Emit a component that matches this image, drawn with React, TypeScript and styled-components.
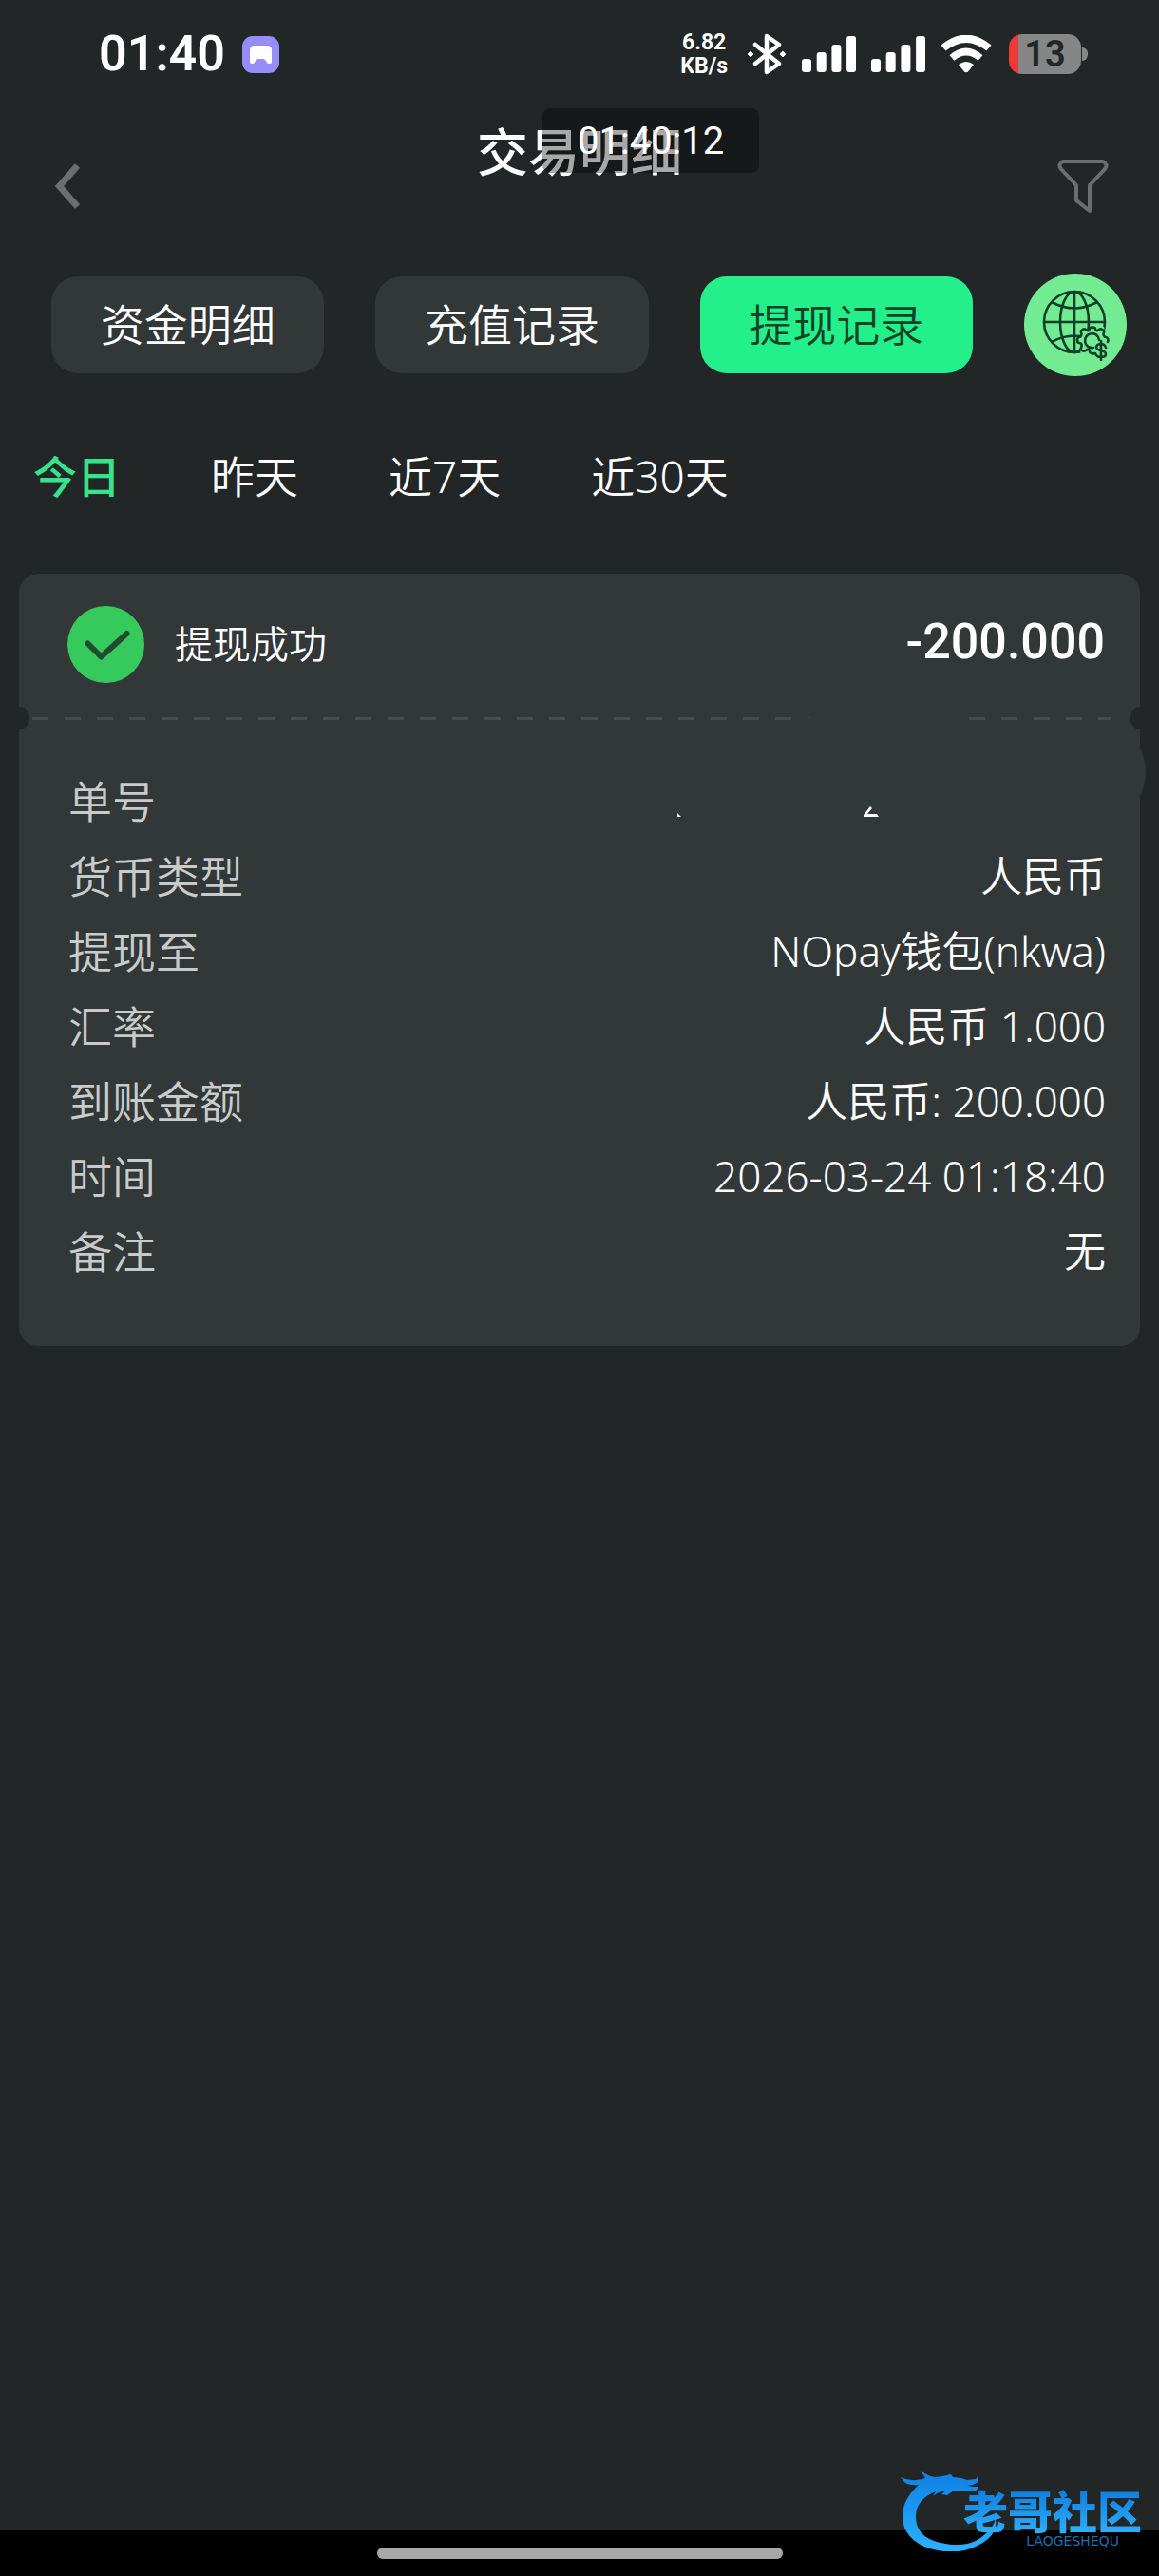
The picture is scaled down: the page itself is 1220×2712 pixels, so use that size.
import React, { useState } from 'react';
import styled, { createGlobalStyle } from 'styled-components';

const latin = `Roboto, "Noto Sans CJK SC", sans-serif`;
const body = `"Noto Sans", "Noto Sans CJK SC", sans-serif`;
const cjk = `"Noto Sans CJK SC", sans-serif`;

const GlobalStyle = createGlobalStyle`
  * { box-sizing: border-box; }
  body { margin: 0; background: #222626; }
  button { border: 0; padding: 0; background: none; font: inherit; color: inherit; cursor: pointer; }
`;

const Screen = styled.div`
  position: relative;
  display: flex;
  flex-direction: column;
  min-height: 100vh;
  overflow: hidden;
  background: #222626;
  color: #fff;
  font-family: ${body};
  font-weight: 350;
`;

const StatusBar = styled.div`
  display: flex;
  align-items: center;
  justify-content: space-between;
  height: 114px;
  padding: 0 75px 0 104px;
  font-family: ${latin};
`;

const StatusGroup = styled.div<{ $gap: number }>`
  display: flex;
  align-items: center;
  gap: ${(p) => p.$gap}px;
`;

const Clock = styled.span`
  font-size: 52px;
  font-weight: 600;
  line-height: 60px;
`;

const Speed = styled.span`
  display: flex;
  flex-direction: column;
  align-items: center;
  margin-right: 4px;
  font-size: 23px;
  font-weight: 700;
  line-height: 25px;
`;

const Battery = styled.div`
  display: flex;
  align-items: center;
  gap: 1px;
  margin-left: 2px;
  &::after {
    content: '';
    width: 6px;
    height: 14px;
    border-radius: 0 6px 6px 0;
    background: #858786;
  }
`;

const BatteryBody = styled.span`
  width: 76px;
  height: 42px;
  border-radius: 14px;
  background: linear-gradient(90deg, #ee3a32 0 10px, #858786 10px);
  color: #222626;
  font-size: 38px;
  font-weight: 600;
  line-height: 43px;
  text-align: center;
`;

const Header = styled.header`
  position: relative;
  display: flex;
  align-items: flex-end;
  justify-content: space-between;
  height: 112px;
  padding: 0 50px;
`;

const Title = styled.h1`
  align-self: flex-start;
  margin: 0;
  font-family: ${cjk};
  font-size: 54px;
  font-weight: 500;
  line-height: 88px;
`;

const IconButton = styled.button`
  display: grid;
  place-items: center;
  width: 60px;
  height: 60px;
  color: #6c6e6e;
  &:first-child { justify-items: start; }
`;

const ClockOverlay = styled.div`
  position: absolute;
  top: 0;
  left: calc(50% - 39px);
  width: 228px;
  height: 68px;
  padding-left: 37px;
  border-radius: 8px;
  background: rgba(0, 0, 0, 0.34);
  font-family: ${latin};
  font-size: 40px;
  font-weight: 400;
  line-height: 70px;
`;

const RecordTabs = styled.nav`
  display: flex;
  align-items: center;
  gap: 54px;
  padding: 62px 34px 0 54px;
`;

const RecordTab = styled.button<{ $active: boolean }>`
  flex: 1;
  height: 102px;
  padding-bottom: 6px;
  border-radius: 28px;
  background: ${(p) => (p.$active ? '#24f08b' : '#323737')};
  color: ${(p) => (p.$active ? '#0b4326' : '#fff')};
  font-family: ${cjk};
  font-size: 46px;
  line-height: 60px;
`;

const CurrencyButton = styled.button`
  display: grid;
  place-items: center;
  flex: none;
  width: 108px;
  height: 108px;
  border-radius: 50%;
  background: #73eb92;
  color: #10402a;
`;

const DateTabs = styled.nav`
  display: flex;
  gap: 95px;
  padding: 75px 35px 73px;
`;

const DateTab = styled.button<{ $active: boolean }>`
  color: ${(p) => (p.$active ? '#36e38b' : '#fff')};
  font-size: 46px;
  font-weight: ${(p) => (p.$active ? 500 : 350)};
  line-height: 60px;
`;

const Card = styled.article`
  position: relative;
  margin: 0 20px;
  border-radius: 20px;
  background: #323737;
`;

const CardHead = styled.header`
  display: flex;
  align-items: center;
  height: 151px;
  padding: 0 37px 2px 51px;
`;

const Status = styled.h2`
  flex: 1;
  margin: 0 0 0 32px;
  padding-bottom: 6px;
  font-family: ${cjk};
  font-size: 40px;
  font-weight: 350;
  line-height: 60px;
`;

const Amount = styled.strong`
  padding-bottom: 6px;
  font-family: ${latin};
  font-size: 52px;
  font-weight: 500;
  line-height: 60px;
`;

const Divider = styled.div`
  position: relative;
  height: 3px;
  margin: 0 30px 0 14px;
  background: repeating-linear-gradient(90deg, #494c4c 0 17px, transparent 17px 34px);
  &::before,
  &::after {
    content: '';
    position: absolute;
    top: -11px;
    height: 24px;
    background: #222626;
  }
  &::before {
    left: -14px;
    width: 11px;
    border-radius: 0 12px 12px 0;
  }
  &::after {
    right: -30px;
    width: 10px;
    border-radius: 12px 0 0 12px;
  }
`;

const Redaction = styled.svg`
  position: absolute;
  top: 126px;
  right: -20px;
`;

const Details = styled.dl`
  display: flex;
  flex-direction: column;
  gap: 24px;
  margin: 0;
  padding: 58px 36px 72px 52px;
`;

const DetailRow = styled.div`
  display: flex;
  align-items: center;
  justify-content: space-between;
  line-height: 55px;
`;

const Label = styled.dt`
  color: #c9cbcb;
  font-size: 46px;
`;

const Value = styled.dd`
  margin: 0;
  font-size: 44px;
`;

const HomeBar = styled.footer`
  display: grid;
  place-items: center;
  height: 48px;
  margin-top: auto;
  background: #000;
  &::after {
    content: '';
    width: 35%;
    height: 12px;
    border-radius: 6px;
    background: #a8a8a8;
  }
`;

const Watermark = styled.div`
  position: absolute;
  right: 18px;
  bottom: 26px;
  width: 254px;
  height: 90px;
`;

const DragonArt = styled.svg`
  position: absolute;
  left: 0;
  top: 0;
`;

const WatermarkText = styled.div`
  position: absolute;
  right: 0;
  top: 20px;
  display: flex;
  flex-direction: column;
  align-items: flex-end;
`;

const WatermarkName = styled.span`
  background: linear-gradient(#0b78dc, #2fb0fb);
  background-clip: text;
  color: transparent;
  font-family: ${cjk};
  font-size: 47px;
  font-weight: 900;
  line-height: 52px;
`;

const WatermarkLatin = styled.span`
  margin-right: 24px;
  color: #1a6fb4;
  font-family: "DejaVu Sans", sans-serif;
  font-size: 14px;
  font-weight: 400;
  line-height: 14px;
`;

const AppBadge = () => (
  <svg width="39" height="39" viewBox="0 0 39 39" aria-hidden="true">
    <rect width="39" height="39" rx="11" fill="#978cf8" />
    <path d="M13 10h13q5 0 5 5v12q0 2-2 2h-2l-3-4q-1-1-2-1h-5q-1 0-2 1l-3 4h-2q-2 0-2-2V15q0-5 5-5z" fill="#fff" />
  </svg>
);

const Bluetooth = () => (
  <svg width="42" height="44" viewBox="0 0 42 44" aria-hidden="true">
    <path d="M9 12l25 20-13 9V3l13 9L9 32" fill="none" stroke="#fff" strokeWidth="4.5" strokeLinejoin="round" strokeLinecap="round" />
    <path d="M4 19l3 3-3 3-3-3zM38 19l3 3-3 3-3-3z" fill="#fff" stroke="#fff" strokeLinejoin="round" />
  </svg>
);

const Signal = () => (
  <svg width="57" height="38" viewBox="0 0 57 38" fill="#fff" aria-hidden="true">
    {[14, 21, 29, 38].map((h, i) => (
      <rect key={h} x={i * 15.7} y={38 - h} width="10" height={h} rx="3" />
    ))}
  </svg>
);

const Wifi = () => (
  <svg width="54" height="40" viewBox="0 0 54 40" aria-hidden="true">
    <path d="M3 13.500Q27-6 51 13.500" fill="none" stroke="#fff" strokeWidth="8" />
    <path d="M12 24Q27 11 42 24" fill="none" stroke="#fff" strokeWidth="7.5" />
    <path d="M19 31Q27 25 35 31L29 38.500Q27 40 25 38.500Z" fill="#fff" />
  </svg>
);

const BackIcon = () => (
  <svg width="36" height="50" viewBox="0 0 36 50" fill="none" stroke="currentColor" strokeWidth="7" aria-hidden="true">
    <path d="M31.500 3.500L12.500 25l19 21.500" />
  </svg>
);

const FilterIcon = () => (
  <svg width="54" height="58" viewBox="0 0 54 58" fill="none" stroke="currentColor" strokeWidth="4" aria-hidden="true">
    <path d="M6 3h42q6 3 2 8L34 28v27l-14-11V28L4 11Q0 6 6 3z" strokeLinejoin="round" />
  </svg>
);

const CheckIcon = () => (
  <svg width="81" height="81" viewBox="0 0 81 81" aria-hidden="true">
    <circle cx="40.500" cy="40.500" r="40.500" fill="#36c95c" />
    <path d="M21.500 39.500l14 14 27-24.500" fill="none" stroke="#214a33" strokeWidth="6" strokeLinecap="round" strokeLinejoin="round" />
  </svg>
);

const GlobeIcon = () => (
  <svg width="72" height="76" viewBox="0 0 72 76" fill="none" stroke="currentColor" strokeWidth="2.600" aria-hidden="true">
    <circle cx="35" cy="35" r="32" />
    <ellipse cx="35" cy="35" rx="15" ry="32" />
    <path d="M35 3v64M3 35h64M11 14q24 13 48 0M11 56q24-13 48 0" />
    <path
      d="M54 37l5 4 7-1 1 7 5 4-2 6 2 12-6 6H50l-9-6 1-7-5-5 5-5v-7l7-1z"
      fill="#73eb92"
      stroke="none"
    />
    <path
      d="M70 56c1-2 0-5-2-5s-3-3-2-5-3-5-5-3-4 1-4-1-6-2-6 0-2 3-4 1-6 1-5 3 0 5-2 5-3 6 0 6 3 3 2 5 2 5 5 3 4-1 4 1 3 3 5 2"
      strokeLinecap="round"
    />
    <path d="M61 54a7.500 7.500 0 1 0-6 8" strokeLinecap="round" />
    <path d="M68 62q-1-4-5-4t-5 3q0 3 5 4t5 4q0 3-5 3t-6-4M63 55v20" strokeLinecap="round" />
  </svg>
);

const RedactionMark = () => (
  <Redaction width="540" height="150" viewBox="680 730 540 150" aria-hidden="true">
    <ellipse cx="933" cy="805" rx="108" ry="75" fill="#323737" />
    <circle cx="1151" cy="813" r="55" fill="#323737" />
    <path d="M713 856l4 4h-4zM916 849l2 2-5 6h10l2 3h-16v-2z" fill="#fff" />
  </Redaction>
);

const Dragon = () => (
  <DragonArt width="110" height="90" viewBox="0 0 110 90" aria-hidden="true">
    <defs>
      <linearGradient id="dragon" x1="0" y1="0" x2="0" y2="1">
        <stop offset="0" stopColor="#0f7fe4" />
        <stop offset="1" stopColor="#2bb2ff" />
      </linearGradient>
    </defs>
    <path
      d="M0 12q10 5 23 2l3-1-5-8q8 6 15 7l8-1 9-2 2 3 9 1 6 2 9-1 3-4v7l-6 3-6 1 7 1 5 0-3 5-8-1-7 1-8-1-7 5-6-1 5-4-8 2-6 4 3-5Q15 36 16 55t22 25q33 9 51-8 9-8 11-16 2 12-8 21-20 16-47 13Q13 86 4 65-4 41 19 20q-10 1-15-3z"
      fill="url(#dragon)"
    />
  </DragonArt>
);

const recordTabs = ['资金明细', '充值记录', '提现记录'];
const dateTabs = ['今日', '昨天', '近7天', '近30天'];
const details = [
  ['单号', ''],
  ['货币类型', '人民币'],
  ['提现至', 'NOpay钱包(nkwa)'],
  ['汇率', '人民币 1.000'],
  ['到账金额', '人民币: 200.000'],
  ['时间', '2026-03-24 01:18:40'],
  ['备注', '无'],
];

export default function App() {
  const [record, setRecord] = useState('提现记录');
  const [date, setDate] = useState('今日');

  return (
    <Screen>
      <GlobalStyle />
      <StatusBar>
        <StatusGroup $gap={18}>
          <Clock>01:40</Clock>
          <AppBadge />
        </StatusGroup>
        <StatusGroup $gap={16}>
          <Speed>
            <span>6.82</span>
            <span>KB/s</span>
          </Speed>
          <Bluetooth />
          <Signal />
          <Signal />
          <Wifi />
          <Battery>
            <BatteryBody>13</BatteryBody>
          </Battery>
        </StatusGroup>
      </StatusBar>

      <Header>
        <IconButton aria-label="返回"><BackIcon /></IconButton>
        <Title>交易明细</Title>
        <IconButton aria-label="筛选"><FilterIcon /></IconButton>
        <ClockOverlay>01:40:12</ClockOverlay>
      </Header>

      <RecordTabs>
        {recordTabs.map((name) => (
          <RecordTab key={name} $active={name === record} onClick={() => setRecord(name)}>
            {name}
          </RecordTab>
        ))}
        <CurrencyButton aria-label="货币"><GlobeIcon /></CurrencyButton>
      </RecordTabs>

      <DateTabs>
        {dateTabs.map((name) => (
          <DateTab key={name} $active={name === date} onClick={() => setDate(name)}>
            {name}
          </DateTab>
        ))}
      </DateTabs>

      <Card>
        <CardHead>
          <CheckIcon />
          <Status>提现成功</Status>
          <Amount>-200.000</Amount>
        </CardHead>
        <Divider />
        <RedactionMark />
        <Details>
          {details.map(([label, value]) => (
            <DetailRow key={label}>
              <Label>{label}</Label>
              <Value>{value}</Value>
            </DetailRow>
          ))}
        </Details>
      </Card>

      <HomeBar />
      <Watermark>
        <Dragon />
        <WatermarkText>
          <WatermarkName>老哥社区</WatermarkName>
          <WatermarkLatin>LAOGESHEQU</WatermarkLatin>
        </WatermarkText>
      </Watermark>
    </Screen>
  );
}
